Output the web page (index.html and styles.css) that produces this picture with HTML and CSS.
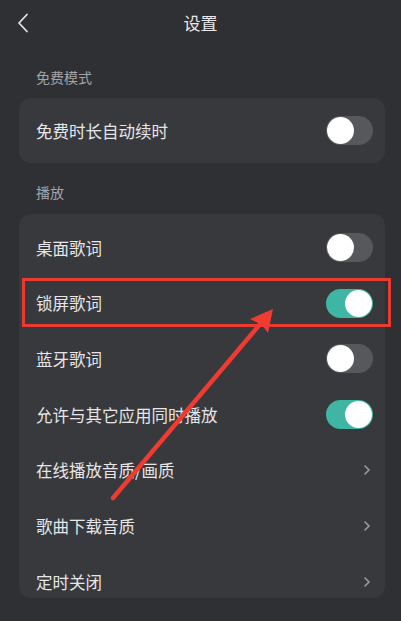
FILE: index.html
```html
<!DOCTYPE html>
<html lang="zh-CN">
<head>
<meta charset="utf-8">
<title>设置</title>
<link rel="stylesheet" href="styles.css">
</head>
<body>
<div class="page">
  <header class="header">
    <svg class="back" width="12" height="20" viewBox="0 0 12 20"><path d="M10 1.5 L2 10 L10 18.5" fill="none" stroke="#e4e4e6" stroke-width="1.8" stroke-linecap="round" stroke-linejoin="round"/></svg>
    <div class="title">设置</div>
  </header>

  <div class="section-label first">免费模式</div>
  <div class="card single">
    <div class="row">
      <span class="row-text">免费时长自动续时</span>
      <span class="toggle"><span class="knob"></span></span>
    </div>
  </div>

  <div class="section-label">播放</div>
  <div class="card list">
    <div class="row">
      <span class="row-text">桌面歌词</span>
      <span class="toggle"><span class="knob"></span></span>
    </div>
    <div class="row">
      <span class="row-text">锁屏歌词</span>
      <span class="toggle on"><span class="knob"></span></span>
    </div>
    <div class="row">
      <span class="row-text">蓝牙歌词</span>
      <span class="toggle"><span class="knob"></span></span>
    </div>
    <div class="row">
      <span class="row-text">允许与其它应用同时播放</span>
      <span class="toggle on"><span class="knob"></span></span>
    </div>
    <div class="row">
      <span class="row-text">在线播放音质/画质</span>
      <svg class="chev" width="8" height="12" viewBox="0 0 8 12"><path d="M2 2 L6 6 L2 10" fill="none" stroke="#9c9da1" stroke-width="1.6" stroke-linecap="round" stroke-linejoin="round"/></svg>
    </div>
    <div class="row">
      <span class="row-text">歌曲下载音质</span>
      <svg class="chev" width="8" height="12" viewBox="0 0 8 12"><path d="M2 2 L6 6 L2 10" fill="none" stroke="#9c9da1" stroke-width="1.6" stroke-linecap="round" stroke-linejoin="round"/></svg>
    </div>
    <div class="row last">
      <span class="row-text">定时关闭</span>
      <svg class="chev" width="8" height="12" viewBox="0 0 8 12"><path d="M2 2 L6 6 L2 10" fill="none" stroke="#9c9da1" stroke-width="1.6" stroke-linecap="round" stroke-linejoin="round"/></svg>
    </div>
  </div>

  <div class="highlight"></div>
  <svg class="arrow" width="401" height="621" viewBox="0 0 401 621">
    <line x1="113" y1="498" x2="261" y2="323" stroke="#ef3b31" stroke-width="4.5" stroke-linecap="round"/>
    <polygon points="273,309 250,319 258,323 262,325 268,333" fill="#ef3b31"/>
  </svg>
</div>
</body>
</html>
```

FILE: styles.css
```css
html, body {
  margin: 0;
  padding: 0;
  background: #2f3034;
}

.page {
  position: relative;
  width: 401px;
  height: 621px;
  overflow: hidden;
  background: #2f3034;
  font-family: "Noto Sans CJK SC", "Noto Sans", sans-serif;
  color: #e6e6e8;
}

.header {
  position: relative;
  height: 46px;
  display: flex;
  align-items: center;
  justify-content: center;
}

.back {
  position: absolute;
  left: 17px;
  top: 13px;
}

.title {
  font-size: 17px;
  line-height: 24px;
  color: #e8e8ea;
}

.section-label {
  font-size: 14px;
  line-height: 20px;
  color: #a3a4a8;
  padding: 19px 0 12px 36px;
}

.section-label.first {
  padding: 21px 0 11px 36px;
}

.card {
  margin: 0 16px 0 19px;
  background: #38393d;
  border-radius: 12px;
}

.card.single {
  height: 65px;
  display: flex;
  flex-direction: column;
  justify-content: center;
}

.card.list {
  padding-top: 6px;
  height: 378px;
  overflow: hidden;
}

.row {
  height: 55.6px;
  display: flex;
  align-items: center;
  justify-content: space-between;
  padding: 0 12px 0 17px;
}

.card.single .row {
  height: 65px;
}

.row.last {
  height: 44px;
  align-items: flex-start;
  padding-top: 16px;
  box-sizing: border-box;
}

.row.last .chev {
  margin-top: 6px;
}

.row-text {
  font-size: 16.5px;
  line-height: 24px;
  color: #e6e6e8;
}

.toggle {
  position: relative;
  width: 47px;
  height: 29px;
  border-radius: 15px;
  background: #57585c;
  flex: none;
}

.toggle .knob {
  position: absolute;
  left: 1px;
  top: 1px;
  width: 27px;
  height: 27px;
  border-radius: 50%;
  background: #ffffff;
}

.toggle.on {
  background: #3eb6a3;
}

.toggle.on .knob {
  left: 19px;
}

.chev {
  margin-right: 2px;
  flex: none;
}

.highlight {
  position: absolute;
  left: 22px;
  top: 278px;
  width: 363px;
  height: 43px;
  border: 3px solid #ea3b31;
}

.arrow {
  position: absolute;
  left: 0;
  top: 0;
}
```
